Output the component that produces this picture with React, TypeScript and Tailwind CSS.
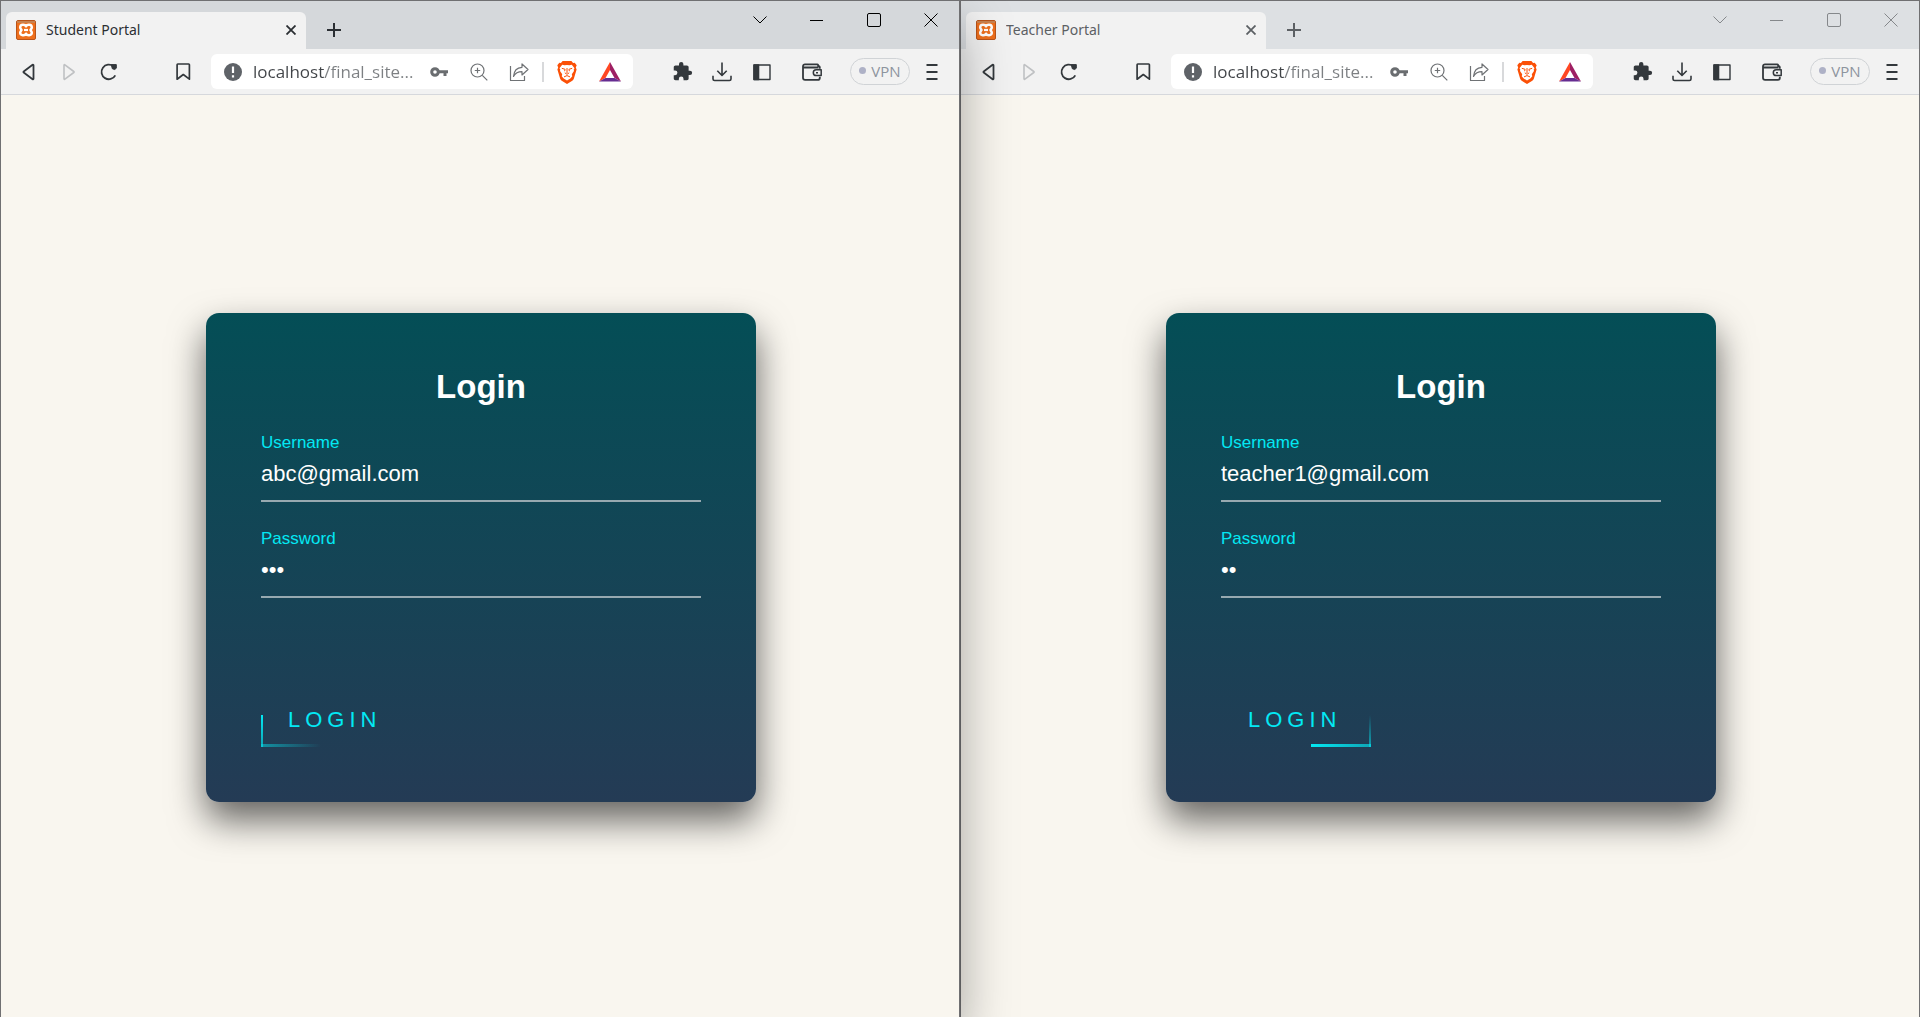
import { useId, useState } from "react";
import type { ReactNode } from "react";

type Trace = "left" | "right";

interface Portal {
  title: string;
  username: string;
  password: string;
  active: boolean;
  trace: Trace;
}

const portals: Portal[] = [
  { title: "Student Portal", username: "abc@gmail.com", password: "abc", active: true, trace: "left" },
  { title: "Teacher Portal", username: "teacher1@gmail.com", password: "t1", active: false, trace: "right" },
];

function Favicon() {
  return (
    <svg viewBox="0 0 20 20" className="size-5 shrink-0" aria-hidden="true">
      <rect x="0.5" y="0.5" width="19" height="19" rx="1.5" fill="#ee6f1c" stroke="#b9541a" />
      <rect x="1" y="1" width="18" height="2" fill="#c98350" />
      <path
        d="M10 6.300C9.200 4.200 4.300 4 4.200 7.200c0 1.500.9 2 1.300 2.800-.4.800-1.300 1.300-1.300 2.800.1 3.200 5 3 5.800.9.800 2.100 5.700 2.300 5.800-.9 0-1.500-.9-2-1.300-2.800.4-.8 1.300-1.300 1.300-2.800-.1-3.200-5-3-5.800-.9Z"
        fill="none"
        stroke="#fff"
        strokeWidth="2.500"
        strokeLinejoin="round"
      />
      <path d="M8 10h4" stroke="#fff" strokeWidth="2.200" />
    </svg>
  );
}

function BraveLion() {
  return (
    <svg viewBox="0 0 20 24" className="h-6 w-5" aria-hidden="true">
      <path d="M5.600 1h8.800l1.700 2 1.600-.2 2 2.400-.9 2.200.8 2-2.700 9.100c-.3 1-.8 1.700-1.600 2.300L10 24l-5.300-3.200c-.8-.6-1.300-1.300-1.600-2.300L.4 9.400l.8-2L.3 5.200l2-2.400 1.600.2Z" fill="#fb5007" />
      <path d="M5.200 4.800l2.300.5L10 4.900l2.500.4 2.300-.5 2.700 3.400-.8 1.300.3 1.500-2.200 3.300.5 1.900-2 2.200L10 20.600 6.700 18.400l-2-2.200.5-1.900L3 11l.3-1.500-.8-1.300Z" fill="#fff" />
      <path d="M4.800 8.300l3.300 1-.5 1.900M15.200 8.300l-3.300 1 .5 1.900M10 8v5M7.800 12.800l2.200 1.500 2.200-1.500M7 16.900l3-1.300 3 1.300" fill="none" stroke="#fb5007" strokeWidth="1" />
    </svg>
  );
}

function BatTriangle() {
  return (
    <svg viewBox="0 0 22 20" className="h-5 w-[22px]" aria-hidden="true">
      <path d="M11 0 0 19.500l6.500-3.600L11 8Z" fill="#ff4724" />
      <path d="M11 0v8l4.500 7.900 6.500 3.600Z" fill="#9e1f63" />
      <path d="M0 19.500h22l-6.500-3.600h-9Z" fill="#662d91" />
    </svg>
  );
}

function Stroke({ children, className, width = 1.5 }: { children: ReactNode; className: string; width?: number }) {
  return (
    <svg
      viewBox="0 0 20 20"
      fill="none"
      stroke="currentColor"
      strokeWidth={width}
      strokeLinejoin="round"
      className={className}
      aria-hidden="true"
    >
      {children}
    </svg>
  );
}

function IconButton({ label, children }: { label: string; children: ReactNode }) {
  return (
    <button type="button" aria-label={label} className="flex h-9 w-10 shrink-0 items-center justify-center">
      {children}
    </button>
  );
}

function TabStrip({ title, active }: { title: string; active: boolean }) {
  const tone = active ? "text-[#2b2f33]" : "text-[#5c6064]";
  const caption = active ? "text-black" : "text-[#85888b]";
  return (
    <div className={`flex h-12 pl-[5px] ${active ? "bg-[#d5d8db]" : "bg-[#dde0e3]"}`}>
      <div className={`mt-[11px] flex w-[300px] items-center rounded-t-md bg-[#f2f2f2] pr-[5px] pb-0.5 pl-2.5 ${tone}`}>
        <Favicon />
        <span className="ml-2.5 flex-1 truncate font-['Noto_Sans'] text-sm leading-5">{title}</span>
        <button type="button" aria-label="Close tab" className="flex size-5 items-center justify-center">
          <svg viewBox="0 0 10 10" className="size-2.5" stroke="currentColor" strokeWidth="1.800" aria-hidden="true">
            <path d="m.5.5 9 9m0-9-9 9" />
          </svg>
        </button>
      </div>
      <button type="button" aria-label="New tab" className={`mt-[11px] ml-3.5 flex h-9 w-7 items-center justify-center ${tone}`}>
        <svg viewBox="0 0 14 14" className="size-3.5" stroke="currentColor" strokeWidth="2" aria-hidden="true">
          <path d="M7 0v14M0 7h14" />
        </svg>
      </button>
      <div className={`ml-auto flex h-[38px] ${caption}`}>
        <button type="button" aria-label="Search tabs" className="flex w-[57px] items-center justify-center">
          <svg viewBox="0 0 14 8" className="h-2 w-3.5" fill="none" stroke="currentColor" aria-hidden="true">
            <path d="m.5.5 6.500 6.500L13.500.5" />
          </svg>
        </button>
        <button type="button" aria-label="Minimize" className="flex w-[57px] items-center justify-center">
          <span className="h-px w-[13px] bg-current" />
        </button>
        <button type="button" aria-label="Maximize" className="flex w-[57px] items-center justify-center">
          <span className="size-3.5 rounded-xs border border-current" />
        </button>
        <button type="button" aria-label="Close window" className="flex w-[57px] items-center justify-center">
          <svg viewBox="0 0 14 14" className="size-3.5" stroke="currentColor" aria-hidden="true">
            <path d="m.5.5 13 13m0-13-13 13" />
          </svg>
        </button>
      </div>
    </div>
  );
}

function Toolbar() {
  return (
    <div className="flex h-[46px] items-center border-b border-[#d6d8dc] bg-[#f2f2f2] pr-[7px] pl-2 text-[#33383c]">
      <IconButton label="Back">
        <Stroke className="size-5" width={1.800}>
          <path d="M14.500 3.300v13.400c0 .5-.5.8-.9.500L4.700 10.500a.6.600 0 0 1 0-1l8.900-6.700c.4-.3.900 0 .9.500Z" />
        </Stroke>
      </IconButton>
      <IconButton label="Forward">
        <Stroke className="size-5 text-[#bfc1c3]" width={1.600}>
          <path d="M5 3.300v13.400c0 .5.500.8.900.5l8.900-6.700a.6.600 0 0 0 0-1L5.900 2.800C5.500 2.500 5 2.800 5 3.300Z" />
        </Stroke>
      </IconButton>
      <IconButton label="Reload">
        <Stroke className="size-5" width={1.800}>
          <path d="M16.300 13.300A7.300 7.300 0 1 1 14.500 4.300" />
          <path d="M12.300 2.600h5v3.600l-1.600 1.300-2.400-.8Z" fill="currentColor" strokeWidth="1" />
        </Stroke>
      </IconButton>
      <div className="ml-[34px] flex">
        <IconButton label="Bookmark this page">
          <Stroke className="size-5" width={1.700}>
            <path d="M4.800 2h10.900c.4 0 .7.300.7.700v14.500L10.300 12.500 4.100 17.200V2.700c0-.4.300-.7.700-.7Z" />
          </Stroke>
        </IconButton>
      </div>
      <div className="ml-2 flex h-[35px] min-w-0 flex-1 items-center rounded-md bg-white pr-[3px] pl-[13px] text-[#6f7275]">
        <svg viewBox="0 0 18 18" className="size-[18px] shrink-0" aria-hidden="true">
          <circle cx="9" cy="9" r="9" fill="#5f6368" />
          <path d="M9 3.500v6.500M9 12.200v2.200" stroke="#fff" strokeWidth="2.200" />
        </svg>
        <input
          type="text"
          aria-label="Address"
          defaultValue="localhost/final_site..."
          className="ml-[11px] min-w-0 flex-1 bg-[linear-gradient(90deg,#404347_71px,#7d8083_71px)] bg-clip-text font-['Open_Sans'] text-[17px] leading-6 text-transparent caret-black outline-none"
        />
        <IconButton label="Saved passwords">
          <svg viewBox="0 0 20 12" className="h-3 w-5" aria-hidden="true" fill="none" stroke="#6a6d70">
            <circle cx="6" cy="6" r="3.300" strokeWidth="3" />
            <path d="M10 5.800h9M16 6v4" strokeWidth="3" />
          </svg>
        </IconButton>
        <IconButton label="Zoom">
          <Stroke className="size-5" width={1.200}>
            <circle cx="8.500" cy="8.500" r="6.500" />
            <path d="m13.300 13.300 5 5M8.500 5.800v5.400M5.800 8.500h5.400" />
          </Stroke>
        </IconButton>
        <IconButton label="Share">
          <Stroke className="size-5" width={1.200}>
            <path d="M1.500 4v14.500h14V14" />
            <path d="M13 2v3.300C8 5.500 5 8.500 4.500 14.500c2-3.600 4.500-4.800 8.500-4.800V13l6-5.500Z" />
          </Stroke>
        </IconButton>
        <span className="mx-[3px] h-5 w-0.5 shrink-0 bg-[#d8d9db]" />
        <IconButton label="Brave Shields">
          <BraveLion />
        </IconButton>
        <div className="ml-[3px]">
          <IconButton label="Brave Rewards">
            <BatTriangle />
          </IconButton>
        </div>
      </div>
      <div className="ml-[29px] flex">
        <IconButton label="Extensions">
          <svg viewBox="0 0 24 24" className="size-[21px]" fill="currentColor" aria-hidden="true">
            <path d="M20.500 11H19V7c0-1.100-.9-2-2-2h-4V3.500a2.500 2.500 0 0 0-5 0V5H4c-1.100 0-2 .9-2 2v3.800h1.500a2.700 2.700 0 0 1 0 5.400H2V20c0 1.100.9 2 2 2h3.800v-1.500a2.700 2.700 0 0 1 5.400 0V22H17c1.100 0 2-.9 2-2v-4h1.500a2.500 2.500 0 0 0 0-5Z" />
          </svg>
        </IconButton>
        <IconButton label="Downloads">
          <Stroke className="size-5" width={1.600}>
            <path d="M10 .5v12.700M5.300 8.800l4.700 4.700 4.700-4.700M1 13.800v3.100c0 .9.700 1.600 1.600 1.600h14.800c.9 0 1.600-.7 1.600-1.600v-3.100" />
          </Stroke>
        </IconButton>
        <IconButton label="Sidebar">
          <Stroke className="size-5" width={1.400}>
            <rect x="2" y="3" width="16" height="14.500" />
            <path d="M2 3h4.600v14.500H2Z" fill="currentColor" />
          </Stroke>
        </IconButton>
      </div>
      <div className="ml-2.5">
        <IconButton label="Wallet">
          <Stroke className="size-5" width={1.800}>
            <path d="M17.800 6.800V5.600c0-1-.8-1.700-1.700-1.700V3c0-.3-.3-.6-.6-.6H3C1.800 2.400 1 3.200 1 4.300v11.400c0 1.200.9 2.100 2.100 2.100h12.800c1 0 1.900-.8 1.900-1.900v-1.200M1.500 5.500h15" />
            <path d="M19.200 7.800h-5a2.900 2.900 0 0 0 0 5.800h5ZM14 10.700h2" strokeWidth="1.500" />
          </Stroke>
        </IconButton>
      </div>
      <button
        type="button"
        className="ml-[18px] flex h-[27px] w-[60px] shrink-0 items-center justify-center gap-[5px] rounded-full border border-[#d0d3d6] pb-0.5 font-['Open_Sans'] text-[15px] leading-5 text-[#8d949e]"
      >
        <span className="size-[7px] rounded-full bg-[#aeb1c6]" />
        VPN
      </button>
      <div className="ml-0.5">
        <IconButton label="Menu">
          <Stroke className="size-5" width={1.800}>
            <path d="M4.500 3h11M4.500 10h11M4.500 17h11" />
          </Stroke>
        </IconButton>
      </div>
    </div>
  );
}

function Field({ label, type, initial }: { label: string; type: "text" | "password"; initial: string }) {
  const id = useId();
  const [value, setValue] = useState(initial);
  return (
    <div className="flex flex-col gap-2">
      <label htmlFor={id} className="text-[17px] leading-5 text-[#03e9f4]">
        {label}
      </label>
      <input
        id={id}
        type={type}
        value={value}
        onChange={(event) => setValue(event.target.value)}
        className="h-[41px] w-full border-b-2 border-[#97a9b0] pb-3.5 text-[22px] leading-[25px] text-white outline-none"
      />
    </div>
  );
}

/* The light that runs round the button's border, caught at one corner. */
function BorderTrace({ side }: { side: Trace }) {
  if (side === "left") {
    return (
      <>
        <span className="absolute bottom-0 left-0 h-[3px] w-[60px] bg-linear-to-r from-[#03e9f4]/50 to-transparent" />
        <span className="absolute bottom-0 left-0 h-8 w-0.5 bg-linear-to-b from-[#03e9f4] to-[#03e9f4]/60" />
      </>
    );
  }
  return (
    <>
      <span className="absolute right-0 bottom-0 h-[3px] w-[60px] bg-linear-to-r from-[#03e9f4] to-[#03e9f4]/60" />
      <span className="absolute right-0 bottom-0 h-8 w-0.5 bg-linear-to-b from-transparent to-[#03e9f4]/60" />
    </>
  );
}

function LoginCard({ username, password, trace }: { username: string; password: string; trace: Trace }) {
  return (
    <form
      onSubmit={(event) => event.preventDefault()}
      className="w-[550px] max-w-full rounded-[13px] bg-[linear-gradient(#044e56,#243b55)] p-[55px] font-['Liberation_Sans',Arial,sans-serif] shadow-[0_18px_36px_rgba(0,0,0,0.6)]"
    >
      <h1 className="text-center text-[33px] leading-[38px] font-bold text-white">Login</h1>
      <div className="mt-[27px] flex flex-col gap-[27px]">
        <Field label="Username" type="text" initial={username} />
        <Field label="Password" type="password" initial={password} />
      </div>
      <button
        type="submit"
        className="relative mt-[94px] block py-[15px] pr-[30px] pl-[27px] text-[22px] leading-[25px] tracking-[5px] text-[#03e9f4]"
      >
        LOGIN
        <BorderTrace side={trace} />
      </button>
    </form>
  );
}

function BrowserWindow({ portal }: { portal: Portal }) {
  return (
    <section
      aria-label={portal.title}
      className={`flex min-w-0 flex-col border border-b-0 border-[#707072] ${
        portal.active ? "relative z-10 shadow-[0_24px_50px_rgba(0,0,0,0.35)]" : ""
      }`}
    >
      <TabStrip title={portal.title} active={portal.active} />
      <Toolbar />
      <main className="flex flex-1 items-center justify-center bg-[#f9f6ef] pt-[3px] pl-0.5">
        <LoginCard username={portal.username} password={portal.password} trace={portal.trace} />
      </main>
    </section>
  );
}

export default function App() {
  return (
    <div className="grid min-h-screen grid-cols-2 overflow-hidden">
      {portals.map((portal) => (
        <BrowserWindow key={portal.title} portal={portal} />
      ))}
    </div>
  );
}
